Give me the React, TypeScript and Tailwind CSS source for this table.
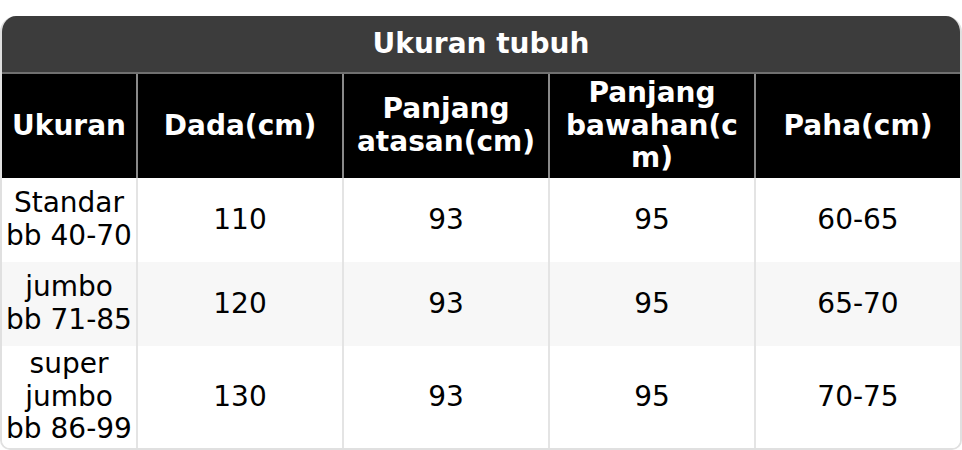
import React from "react";

const headers = ["Ukuran", "Dada(cm)", "Panjang atasan(cm)", "Panjang bawahan(cm)", "Paha(cm)"];
const rows = [
  ["Standar bb 40-70", "110", "93", "95", "60-65"],
  ["jumbo bb 71-85", "120", "93", "95", "65-70"],
  ["super jumbo bb 86-99", "130", "93", "95", "70-75"],
];
const rowH = ["h-[84px]", "h-[84px]", "h-[102px]"];

export default function App() {
  return (
    <div className="w-[962px] h-[450px] bg-white pt-4" style={{ fontFamily: "'DejaVu Sans', sans-serif" }}>
      <div className="w-[962px] rounded-t-[16px] rounded-b-[10px] overflow-hidden border-x-2 border-b-2 border-[#e0e0e0]">
        <div className="h-[58px] bg-[#3c3c3c] text-white font-bold text-[28px] flex items-center justify-center border-b-2 border-[#707070]">
          Ukuran tubuh
        </div>
        <div className="grid grid-cols-[134px_206px_206px_206px_1fr] bg-black h-[104px]">
          {headers.map((h, i) => (
            <div
              key={i}
              className={`flex items-center justify-center text-center text-white font-bold text-[28px] leading-[32.6px] px-[6px] ${i > 0 ? "border-l-2 border-[#8a8a8a]" : ""}`}
            >
              <span className="min-w-0 [overflow-wrap:anywhere]">{h}</span>
            </div>
          ))}
        </div>
        {rows.map((r, ri) => (
          <div
            key={ri}
            className={`grid grid-cols-[134px_206px_206px_206px_1fr] ${rowH[ri]} ${ri === 1 ? "bg-[#f7f7f7]" : "bg-white"}`}
          >
            {r.map((c, ci) => (
              <div
                key={ci}
                className={`flex items-center justify-center text-center text-black text-[28px] leading-[32.6px] px-[4px] ${ci > 0 ? "border-l-2 border-[#e4e4e4]" : ""}`}
              >
                <span className="min-w-0">{c}</span>
              </div>
            ))}
          </div>
        ))}
      </div>
    </div>
  );
}
